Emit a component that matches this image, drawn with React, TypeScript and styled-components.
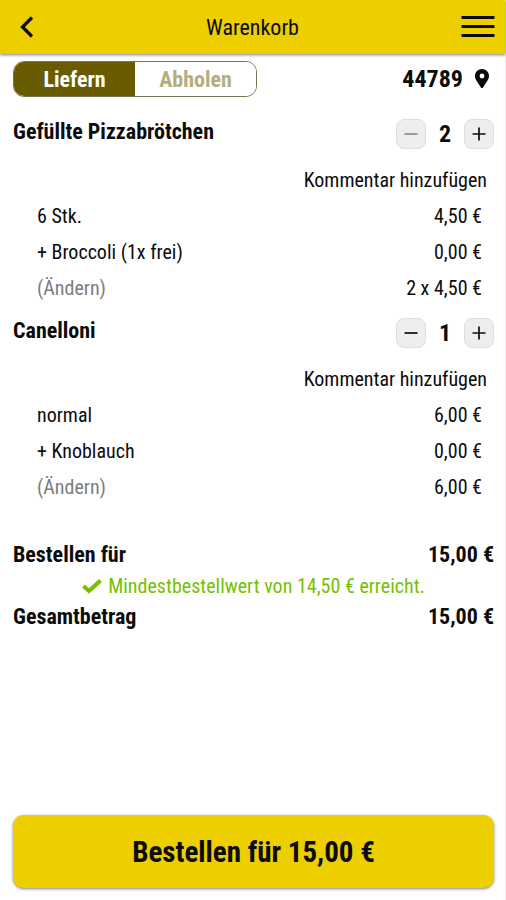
import React, { useState } from "react";
import styled, { createGlobalStyle } from "styled-components";

const GlobalStyle = createGlobalStyle`
  *, *::before, *::after { box-sizing: border-box; }
  body {
    margin: 0;
    background: #fff;
    color: #0c0c0c;
    font-family: "Roboto Condensed", Roboto, sans-serif;
    font-size: 20px;
    line-height: 36px;
  }
  button {
    font: inherit;
    color: inherit;
    padding: 0;
    border: 0;
    background: none;
    cursor: pointer;
  }
  h1, h2, ul, dl, dd, p { margin: 0; padding: 0; font: inherit; }
`;

const Page = styled.div`
  min-height: 100vh;
  display: flex;
  flex-direction: column;
  border-right: 1px solid #f3ead8;
`;

const Header = styled.header`
  height: 54px;
  padding: 0 9px;
  display: grid;
  grid-template-columns: 36px 1fr 36px;
  align-items: center;
  background: #edcf00;
  box-shadow: 0 1px 3px rgba(0, 0, 0, 0.5);
`;

const HeaderTitle = styled.h1`
  padding-top: 2px;
  font-size: 22px;
  text-align: center;
`;

const IconButton = styled.button`
  height: 36px;
  display: grid;
  place-items: center;
  svg { display: block; }
`;

const Main = styled.main`
  flex: 1;
  display: flex;
  flex-direction: column;
  padding: 7px 11px 12px 13px;
`;

const ModeBar = styled.div`
  display: flex;
  justify-content: space-between;
  align-items: center;
  margin-bottom: 22px;
`;

const Toggle = styled.div`
  display: grid;
  grid-template-columns: 1fr 1fr;
  width: 244px;
  height: 36px;
  border: 1px solid #7b7450;
  border-radius: 11px;
  overflow: hidden;
`;

const ToggleOption = styled.button<{ $active: boolean }>`
  font-size: 22px;
  line-height: 36px;
  font-weight: 700;
  background: ${(p) => (p.$active ? "#685b00" : "#fff")};
  color: ${(p) => (p.$active ? "#fff" : "#b5ad7f")};
`;

const PostalCode = styled.button`
  display: flex;
  align-items: center;
  gap: 12px;
  padding-right: 5px;
  font-size: 24px;
  font-weight: 700;
`;

const Item = styled.section`
  padding-bottom: 12px;
`;

const ItemHead = styled.div`
  display: flex;
  justify-content: space-between;
  align-items: flex-start;
  height: 43px;
`;

const ItemName = styled.h2`
  font-size: 22px;
  line-height: 26px;
  font-weight: 700;
`;

const Stepper = styled.div`
  display: grid;
  grid-template-columns: 30px 38px 30px;
  align-items: center;
`;

const StepButton = styled.button<{ $muted?: boolean }>`
  height: 30px;
  display: grid;
  place-items: center;
  border: 1px solid #dedede;
  border-radius: 8px;
  background: #eeeeee;
  color: ${(p) => (p.$muted ? "#8a8a8a" : "#0c0c0c")};
`;

const Amount = styled.output`
  font-size: 24px;
  line-height: 30px;
  font-weight: 700;
  text-align: center;
`;

const CommentButton = styled.button`
  display: block;
  margin: 0 7px 0 auto;
`;

const Lines = styled.ul`
  list-style: none;
  padding: 0 12px 0 24px;
`;

const Line = styled.li`
  display: flex;
  justify-content: space-between;
`;

const ChangeButton = styled.button`
  color: #7d7d7d;
`;

const Totals = styled.dl`
  padding-top: 22px;
`;

const TotalRow = styled.div`
  display: flex;
  justify-content: space-between;
  font-size: 22px;
  line-height: 32px;
  font-weight: 700;
`;

const MinimumNote = styled.p`
  display: flex;
  justify-content: center;
  align-items: center;
  gap: 6px;
  line-height: 30px;
  color: #76c000;
`;

const OrderButton = styled.button`
  height: 73px;
  margin-top: auto;
  border-radius: 11px;
  background: #edcf00;
  box-shadow: 0 1px 3px rgba(0, 0, 0, 0.5);
  font-size: 29px;
  font-weight: 700;
`;

type OrderItem = {
  name: string;
  amount: number;
  parts: { label: string; price: string }[];
  sum: string;
};

const items: OrderItem[] = [
  {
    name: "Gefüllte Pizzabrötchen",
    amount: 2,
    parts: [
      { label: "6 Stk.", price: "4,50 €" },
      { label: "+ Broccoli (1x frei)", price: "0,00 €" },
    ],
    sum: "2 x 4,50 €",
  },
  {
    name: "Canelloni",
    amount: 1,
    parts: [
      { label: "normal", price: "6,00 €" },
      { label: "+ Knoblauch", price: "0,00 €" },
    ],
    sum: "6,00 €",
  },
];

function StepIcon({ plus = false }: { plus?: boolean }) {
  return (
    <svg width="14" height="14" viewBox="0 0 14 14" stroke="currentColor" strokeWidth="1.7" aria-hidden="true">
      <path d={plus ? "M0.5 7H13.5M7 0.5V13.5" : "M0.5 7H13.5"} />
    </svg>
  );
}

export default function App() {
  const [mode, setMode] = useState("Liefern");
  return (
    <>
      <GlobalStyle />
      <Page>
        <Header>
          <IconButton aria-label="Zurück">
            <svg width="14" height="22" viewBox="0 0 14 22" fill="none" stroke="#0c0c0c" strokeWidth="3.2" aria-hidden="true">
              <path d="M12 1.5L2.5 11L12 20.5" />
            </svg>
          </IconButton>
          <HeaderTitle>Warenkorb</HeaderTitle>
          <IconButton aria-label="Menü">
            <svg width="34" height="22" viewBox="0 0 34 22" stroke="#0c0c0c" strokeWidth="3" aria-hidden="true">
              <path d="M0.5 1.5H33.5M0.5 10.5H33.5M0.5 19.5H33.5" />
            </svg>
          </IconButton>
        </Header>
        <Main>
          <ModeBar>
            <Toggle role="group" aria-label="Bestellart">
              {["Liefern", "Abholen"].map((m) => (
                <ToggleOption key={m} $active={m === mode} aria-pressed={m === mode} onClick={() => setMode(m)}>
                  {m}
                </ToggleOption>
              ))}
            </Toggle>
            <PostalCode>
              44789
              <svg width="14" height="20" viewBox="0 0 14 20" fill="currentColor" aria-hidden="true">
                <path fillRule="evenodd" d="M7 0C3.1 0 0 3.1 0 7C0 9.8 1.3 11.3 5.9 18.4C6.4 19.2 7.6 19.2 8.1 18.4C12.7 11.3 14 9.8 14 7C14 3.1 10.9 0 7 0ZM7 4.6A2.4 2.4 0 1 1 7 9.4A2.4 2.4 0 1 1 7 4.6Z" />
              </svg>
            </PostalCode>
          </ModeBar>
          {items.map((item) => (
            <Item key={item.name}>
              <ItemHead>
                <ItemName>{item.name}</ItemName>
                <Stepper>
                  <StepButton $muted={item.amount > 1} aria-label="Weniger">
                    <StepIcon />
                  </StepButton>
                  <Amount>{item.amount}</Amount>
                  <StepButton aria-label="Mehr">
                    <StepIcon plus />
                  </StepButton>
                </Stepper>
              </ItemHead>
              <CommentButton>Kommentar hinzufügen</CommentButton>
              <Lines>
                {item.parts.map((part) => (
                  <Line key={part.label}>
                    <span>{part.label}</span>
                    <span>{part.price}</span>
                  </Line>
                ))}
                <Line>
                  <ChangeButton>(Ändern)</ChangeButton>
                  <span>{item.sum}</span>
                </Line>
              </Lines>
            </Item>
          ))}
          <Totals>
            <TotalRow>
              <dt>Bestellen für</dt>
              <dd>15,00 €</dd>
            </TotalRow>
          </Totals>
          <MinimumNote>
            <svg width="20" height="15" viewBox="0 0 20 15" fill="none" stroke="currentColor" strokeWidth="4" aria-hidden="true">
              <path d="M1.5 7L7 12L18.5 1.5" />
            </svg>
            Mindestbestellwert von 14,50 € erreicht.
          </MinimumNote>
          <dl>
            <TotalRow>
              <dt>Gesamtbetrag</dt>
              <dd>15,00 €</dd>
            </TotalRow>
          </dl>
          <OrderButton>Bestellen für 15,00 €</OrderButton>
        </Main>
      </Page>
    </>
  );
}
